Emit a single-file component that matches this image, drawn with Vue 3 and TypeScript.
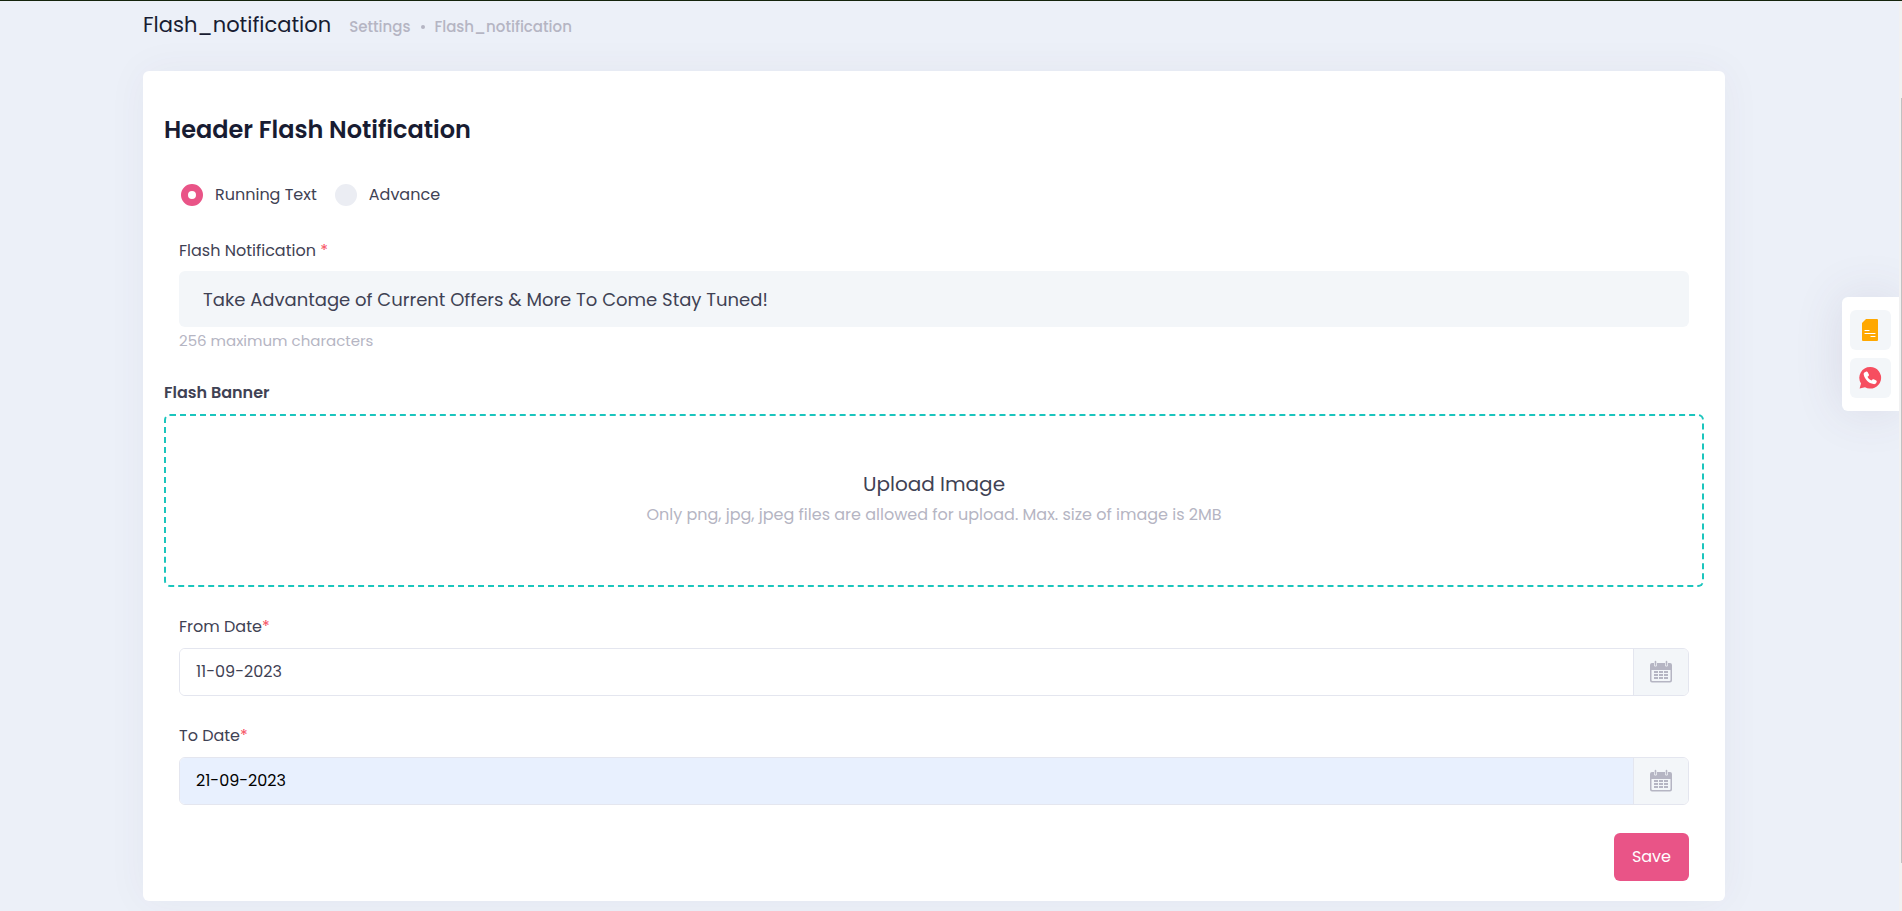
<script setup lang="ts">
import { ref } from 'vue'

const mode = ref<'running' | 'advance'>('running')
const message = ref('Take Advantage of Current Offers & More To Come Stay Tuned!')
const dates = ref([
  { id: 'from-date', label: 'From Date', value: '11-09-2023', filled: false },
  { id: 'to-date', label: 'To Date', value: '21-09-2023', filled: true },
])
const columns = [4, 9, 14]
const rows = [10, 13, 16]
</script>

<template>
  <div class="page">
    <header class="subheader">
      <h1>Flash_notification</h1>
      <nav class="crumbs" aria-label="Breadcrumb">
        <a href="#">Settings</a>
        <span class="dot"></span>
        <a href="#">Flash_notification</a>
      </nav>
    </header>

    <main class="content">
      <form class="card" @submit.prevent>
        <h2>Header Flash Notification</h2>

        <div class="inset radios" role="radiogroup" aria-label="Notification type">
          <label><input v-model="mode" type="radio" name="mode" value="running" />Running Text</label>
          <label><input v-model="mode" type="radio" name="mode" value="advance" />Advance</label>
        </div>

        <div class="inset message">
          <label for="flash-message">Flash Notification <span class="required">*</span></label>
          <input id="flash-message" v-model="message" type="text" maxlength="256" />
          <p>256 maximum characters</p>
        </div>

        <div class="banner">
          <h3>Flash Banner</h3>
          <label class="dropzone">
            <input class="file" type="file" accept=".png,.jpg,.jpeg" />
            <span class="upload-title">Upload Image</span>
            <span class="upload-hint">Only png, jpg, jpeg files are allowed for upload. Max. size of image is 2MB</span>
          </label>
        </div>

        <div v-for="date in dates" :key="date.id" class="inset date">
          <label :for="date.id">{{ date.label }}<span class="required">*</span></label>
          <div class="group" :class="{ filled: date.filled }">
            <input :id="date.id" v-model="date.value" type="text" />
            <button type="button" :aria-label="'Pick ' + date.label">
              <svg width="22" height="24" viewBox="0 0 22 24" aria-hidden="true">
                <path d="M2 3H4V5a1.500 1.500 0 0 0 3 0V3h8V5a1.500 1.500 0 0 0 3 0V3h2a2 2 0 0 1 2 2V20.500a2 2 0 0 1-2 2H2a2 2 0 0 1-2-2V5a2 2 0 0 1 2-2zM1.500 10v10a1 1 0 0 0 1 1h17a1 1 0 0 0 1-1V10z" fill="#b5b5c3" fill-rule="evenodd" />
                <path d="M5.500 1.500v3.500M16.500 1.500v3.500" stroke="#b5b5c3" stroke-width="1.600" stroke-linecap="round" />
                <template v-for="y in rows" :key="y">
                  <rect v-for="x in columns" :key="x" :x="x" :y="y + 1" width="4" height="2" fill="#b5b5c3" />
                </template>
              </svg>
            </button>
          </div>
        </div>

        <div class="inset actions">
          <button type="submit">Save</button>
        </div>
      </form>
    </main>

    <aside class="toolbar" aria-label="Quick links">
      <a href="#" aria-label="Notes">
        <svg width="22" height="24" viewBox="0 0 22 24" aria-hidden="true">
          <path d="M6 1h11a1 1 0 0 1 1 1v20a1 1 0 0 1-1 1H3a1 1 0 0 1-1-1V5z" fill="#ffa800" />
          <path d="M5 12.500h4M5 15.500h10M11 18.500h4" stroke="#fff" stroke-width="1.200" stroke-linecap="round" />
        </svg>
      </a>
      <a href="#" aria-label="WhatsApp">
        <svg width="23" height="22" viewBox="0 0 23 22" aria-hidden="true">
          <path d="M11.200 0A10.800 10.800 0 1 1 6 20.200L.6 21.600 2 16.500A10.800 10.800 0 0 1 11.200 0z" fill="#f64e60" />
          <path d="M5.500 5.500 7.300 4.600c.5-.2 1 0 1.300.5l1.300 2.500c.2.500.1 1-.3 1.300l-1.100.9c.8 1.700 2.100 3 3.900 3.800l1.100-1.100c.3-.3.800-.4 1.200-.2l2.500 1.200c.5.300.7.800.5 1.300l-.5 1.200c-.5.900-1.600 1.300-2.700 1.100C9.500 16.200 5.600 12.200 4.700 7.500c-.1-.8.200-1.600.8-2z" fill="#fff" />
        </svg>
      </a>
    </aside>

    <div class="scroll-track" aria-hidden="true"><div class="scroll-thumb"></div></div>
  </div>
</template>

<style>
body {
  margin: 0;
}
</style>

<style scoped>
* {
  box-sizing: border-box;
}

.page {
  min-height: 100vh;
  border-top: 1px solid #14240c;
  background: #ecf0f8;
  color: #3f4254;
  font-family: Poppins, Inter, 'Open Sans', sans-serif;
  font-size: 16px;
  line-height: 24px;
}

h1,
h2,
h3,
p {
  margin: 0;
}

input,
button {
  font: inherit;
  color: inherit;
}

a {
  color: inherit;
  text-decoration: none;
}

.subheader {
  display: flex;
  align-items: baseline;
  gap: 18px;
  padding: 9px 143px 31px;
}

h1 {
  color: #181c32;
  font-size: 21px;
  font-weight: 400;
  line-height: 30px;
}

.crumbs {
  display: flex;
  align-items: center;
  gap: 10px;
  color: #b5b5c3;
  font-size: 15px;
  font-weight: 500;
}

.dot {
  width: 4px;
  height: 4px;
  border-radius: 50%;
  background: #b5b5c3;
}

.content {
  padding: 0 177px 10px 143px;
}

.card {
  padding: 41px 21px 20px;
  border-radius: 6px;
  background: #fff;
  box-shadow: 0 0 40px rgba(82, 63, 105, 0.05);
}

h2 {
  color: #181c32;
  font-size: 24px;
  font-weight: 600;
  line-height: 36px;
}

.inset {
  margin: 0 15px;
}

.radios {
  display: flex;
  gap: 16px;
  padding-top: 35px;
}

.radios label {
  display: flex;
  align-items: center;
  gap: 12px;
}

.radios input {
  width: 22px;
  height: 22px;
  margin: 0 0 0 2px;
  appearance: none;
  border-radius: 50%;
  background: #ebedf3;
}

.radios input:checked {
  border: 7px solid #e95487;
  background: #fff;
}

.message {
  padding-top: 32px;
}

.message label,
.date label {
  display: block;
}

.required {
  color: #f64e60;
}

.message input {
  display: block;
  width: 100%;
  height: 56px;
  margin-top: 8px;
  padding: 0 24px;
  border: 0;
  border-radius: 6px;
  background: #f3f6f9;
  font-size: 18px;
}

.message p {
  margin-top: 3px;
  color: #b5b5c3;
  font-size: 15px;
  line-height: 22px;
}

.banner {
  padding-top: 29px;
}

h3 {
  font-size: 16px;
  font-weight: 600;
}

.dropzone {
  display: flex;
  flex-direction: column;
  align-items: center;
  gap: 4px;
  margin-top: 9px;
  padding: 53px 20px 58px;
  border: 2px dashed #1bc5bd;
  border-radius: 6px;
  text-align: center;
  cursor: pointer;
}

.file {
  position: absolute;
  width: 1px;
  height: 1px;
  opacity: 0;
}

.upload-title {
  font-size: 20px;
  line-height: 30px;
}

.upload-hint {
  color: #b5b5c3;
}

.date {
  padding-top: 28px;
}

.group {
  display: flex;
  height: 48px;
  margin-top: 9px;
  border: 1px solid #e4e6ef;
  border-radius: 6px;
  overflow: hidden;
}

.group input {
  flex: 1;
  min-width: 0;
  padding: 0 16px;
  border: 0;
  background: #fff;
}

.group.filled input {
  background: #e8f0fe;
  color: #000;
}

.group button {
  display: flex;
  align-items: center;
  justify-content: center;
  width: 55px;
  padding: 0;
  border: 0;
  border-left: 1px solid #e4e6ef;
  background: #f3f6f9;
}

.actions {
  display: flex;
  justify-content: flex-end;
  padding-top: 28px;
}

.actions button {
  height: 48px;
  padding: 0 18px;
  border: 0;
  border-radius: 6px;
  background: #e95487;
  color: #fff;
}

.toolbar {
  position: fixed;
  top: 297px;
  right: 3px;
  display: flex;
  flex-direction: column;
  gap: 8px;
  padding: 13px 8px;
  border-radius: 6px 0 0 6px;
  background: #fff;
  box-shadow: 0 0 50px rgba(82, 63, 105, 0.12);
}

.toolbar a {
  display: flex;
  align-items: center;
  justify-content: center;
  width: 41px;
  height: 40px;
  border-radius: 6px;
  background: #f3f6f9;
}

.scroll-track {
  position: fixed;
  top: 1px;
  right: 0;
  bottom: 0;
  width: 3px;
  padding: 97px 0 48px 2px;
  background: #f1f1f1;
}

.scroll-thumb {
  height: 100%;
  background: #c1c1c1;
}
</style>
